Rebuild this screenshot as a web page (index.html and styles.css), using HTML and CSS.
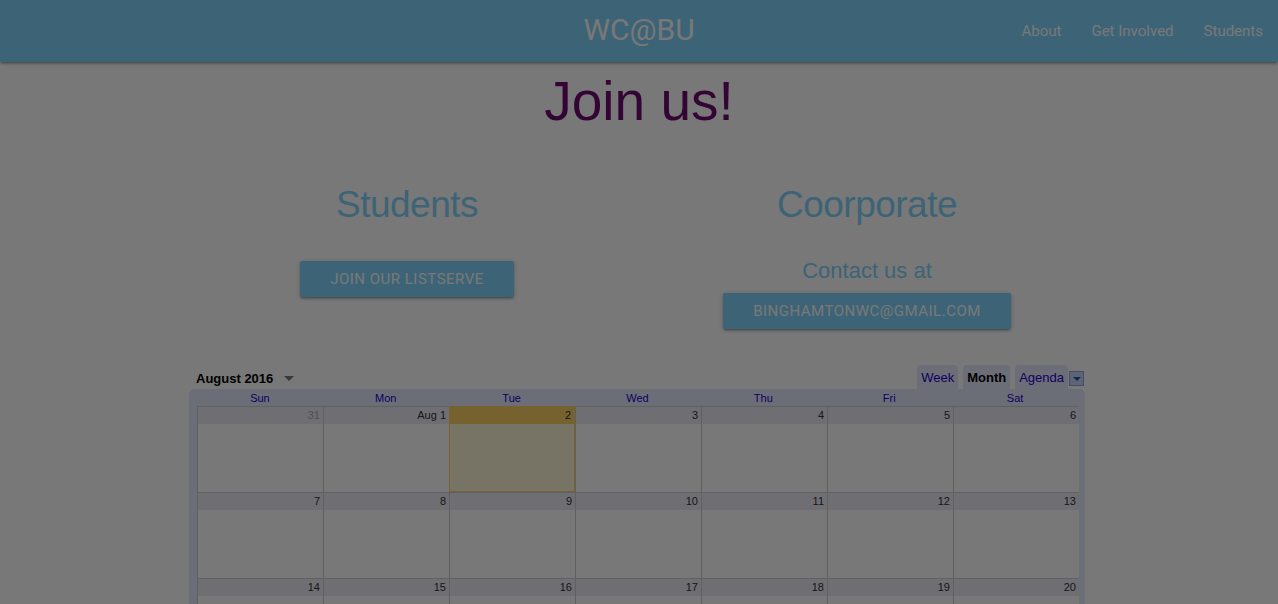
FILE: index.html
```html
<!DOCTYPE html>
<html lang="en">
<head>
<meta charset="utf-8">
<title>WC@BU</title>
<link rel="stylesheet" href="styles.css">
</head>
<body>
<header class="navbar">
  <a class="brand" href="#">WC@BU</a>
  <ul class="nav-links">
    <li><a href="#">About</a></li>
    <li><a href="#">Get Involved</a></li>
    <li><a href="#">Students</a></li>
  </ul>
</header>

<main class="page">
  <h1 class="join-title">Join us!</h1>

  <section class="join-row">
    <div class="join-col">
      <h2 class="col-title">Students</h2>
      <a class="btn btn-students" href="#">Join our listserve</a>
    </div>
    <div class="join-col">
      <h2 class="col-title">Coorporate</h2>
      <p class="contact">Contact us at</p>
      <a class="btn" href="#">binghamtonwc@gmail.com</a>
    </div>
  </section>

  <section class="cal">
    <div class="cal-top">
      <div class="cal-title">August 2016 <span class="cal-caret"></span></div>
      <div class="cal-tabs">
        <span class="cal-tab">Week</span>
        <span class="cal-tab cal-tab-active">Month</span>
        <span class="cal-tab">Agenda</span>
        <span class="cal-drop"><span class="cal-drop-tri"></span></span>
      </div>
    </div>
    <div class="cal-frame">
      <div class="cal-dow">
        <span>Sun</span><span>Mon</span><span>Tue</span><span>Wed</span><span>Thu</span><span>Fri</span><span>Sat</span>
      </div>
      <div class="cal-grid">
        <div class="cell"><div class="num num-other">31</div></div>
        <div class="cell"><div class="num">Aug 1</div></div>
        <div class="cell cell-today"><div class="num">2</div></div>
        <div class="cell"><div class="num">3</div></div>
        <div class="cell"><div class="num">4</div></div>
        <div class="cell"><div class="num">5</div></div>
        <div class="cell"><div class="num">6</div></div>

        <div class="cell"><div class="num">7</div></div>
        <div class="cell"><div class="num">8</div></div>
        <div class="cell"><div class="num">9</div></div>
        <div class="cell"><div class="num">10</div></div>
        <div class="cell"><div class="num">11</div></div>
        <div class="cell"><div class="num">12</div></div>
        <div class="cell"><div class="num">13</div></div>

        <div class="cell"><div class="num">14</div></div>
        <div class="cell"><div class="num">15</div></div>
        <div class="cell"><div class="num">16</div></div>
        <div class="cell"><div class="num">17</div></div>
        <div class="cell"><div class="num">18</div></div>
        <div class="cell"><div class="num">19</div></div>
        <div class="cell"><div class="num">20</div></div>

        <div class="cell"><div class="num">21</div></div>
        <div class="cell"><div class="num">22</div></div>
        <div class="cell"><div class="num">23</div></div>
        <div class="cell"><div class="num">24</div></div>
        <div class="cell"><div class="num">25</div></div>
        <div class="cell"><div class="num">26</div></div>
        <div class="cell"><div class="num">27</div></div>
      </div>
    </div>
  </section>
</main>

<div class="overlay"></div>
</body>
</html>
```

FILE: styles.css
```css
* { box-sizing: border-box; }

html, body {
  margin: 0;
  padding: 0;
}

body {
  background: #ffffff;
  font-family: Roboto, "Liberation Sans", sans-serif;
  color: #333;
}

a { text-decoration: none; }

/* ---------- navbar ---------- */
.navbar {
  position: relative;
  z-index: 2;
  height: 62px;
  background: #81d4fa;
  display: flex;
  justify-content: flex-end;
  align-items: center;
  box-shadow: 0 2px 2px 0 rgba(0,0,0,.14), 0 3px 1px -2px rgba(0,0,0,.12), 0 1px 5px 0 rgba(0,0,0,.2);
}

.brand {
  position: absolute;
  left: 50%;
  top: 0;
  transform: translateX(-50%);
  line-height: 60px;
  font-size: 30px;
  color: #fff;
}

.nav-links {
  list-style: none;
  margin: 0;
  padding: 0;
  display: flex;
}

.nav-links a {
  display: block;
  padding: 0 15px;
  line-height: 60px;
  font-size: 15px;
  color: #fff;
}

/* ---------- page ---------- */
.page {
  padding-top: 8px;
}

.join-title {
  margin: 0;
  text-align: center;
  font-family: "Liberation Sans", Arial, sans-serif;
  font-weight: 400;
  font-size: 55px;
  line-height: 62px;
  color: #700a70;
}

.join-row {
  width: 920px;
  margin-left: calc(50% - 462px);
  display: flex;
  padding-top: 51px;
}

.join-col {
  width: 460px;
  display: flex;
  flex-direction: column;
  align-items: center;
}

.col-title {
  margin: 0;
  font-family: "Liberation Sans", Arial, sans-serif;
  font-weight: 400;
  font-size: 37px;
  letter-spacing: -0.5px;
  line-height: 44px;
  color: #81d4fa;
}

.contact {
  margin: 31px 0 0;
  font-family: "Liberation Sans", Arial, sans-serif;
  font-size: 22px;
  line-height: 26px;
  color: #81d4fa;
}

.btn {
  display: inline-block;
  height: 36px;
  line-height: 36px;
  padding: 0 30px;
  background: #81d4fa;
  color: #fff;
  font-family: Roboto, sans-serif;
  font-size: 15px;
  letter-spacing: .5px;
  text-transform: uppercase;
  border-radius: 2px;
  box-shadow: 0 2px 2px 0 rgba(0,0,0,.14), 0 3px 1px -2px rgba(0,0,0,.12), 0 1px 5px 0 rgba(0,0,0,.2);
  margin-top: 9px;
}

.btn-students {
  margin-top: 34px;
}

/* ---------- calendar ---------- */
.cal {
  width: 896px;
  margin-top: 35px;
  margin-left: calc(50% - 450px);
  font-family: "Liberation Sans", Arial, sans-serif;
}

.cal-top {
  display: flex;
  justify-content: space-between;
  align-items: flex-end;
  height: 25px;
}

.cal-title {
  padding: 0 0 3px 7px;
  font-size: 13px;
  font-weight: 700;
  color: #000;
  display: flex;
  align-items: center;
}

.cal-caret {
  display: inline-block;
  margin-left: 11px;
  width: 0;
  height: 0;
  border-left: 5px solid transparent;
  border-right: 5px solid transparent;
  border-top: 5px solid #777;
}

.cal-tabs {
  display: flex;
  align-items: flex-end;
}

.cal-tab {
  height: 24px;
  line-height: 26px;
  margin-left: 5px;
  padding: 0 4px;
  background: #e3e8fd;
  border-radius: 4px 4px 0 0;
  font-size: 13px;
  color: #2200cc;
}

.cal-tab-active {
  color: #000;
  font-weight: 700;
}

.cal-drop {
  align-self: flex-start;
  margin: 6px 1px 0 1px;
  width: 15px;
  height: 15px;
  border: 1px solid #8ea7d8;
  background: #c3d5fb;
  display: flex;
  align-items: center;
  justify-content: center;
}

.cal-drop-tri {
  width: 0;
  height: 0;
  border-left: 4px solid transparent;
  border-right: 4px solid transparent;
  border-top: 4px solid #2952a3;
}

.cal-frame {
  background: #e3e8fd;
  border-radius: 6px 6px 0 0;
  padding: 1px 7px 0 8px;
}

.cal-dow {
  display: grid;
  grid-template-columns: repeat(7, 1fr);
  height: 16px;
  line-height: 17px;
  font-size: 11px;
  color: #2200cc;
  text-align: center;
}

.cal-grid {
  display: grid;
  grid-template-columns: repeat(7, 126px);
  grid-auto-rows: 86px;
  background: #fff;
  border-right: 1px solid #cccccc;
}

.cell {
  border-left: 1px solid #cccccc;
  border-top: 1px solid #cccccc;
  background: #fff;
}

.num {
  height: 17px;
  line-height: 17px;
  padding-right: 3px;
  text-align: right;
  font-size: 11px;
  color: #333;
  background: #eaeaf4;
}

.num-other {
  color: #aaa;
}

.cell-today {
  background: #fff7d7;
  border: 1px solid #fad163;
}

.cell-today .num {
  background: #fad163;
}

/* ---------- modal backdrop ---------- */
.overlay {
  position: fixed;
  inset: 0;
  background: rgba(0,0,0,.53);
  z-index: 10;
}
```
